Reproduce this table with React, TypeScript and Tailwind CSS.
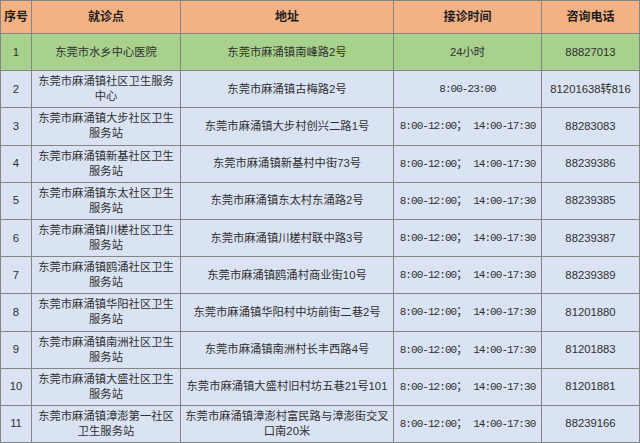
import React from "react";

interface Clinic {
  id: number;
  name: string;
  address: string;
  hours: string;
  phone: string;
}

const clinics: Clinic[] = [
  { id: 1, name: "东莞市水乡中心医院", address: "东莞市麻涌镇南峰路2号", hours: "24小时", phone: "88827013" },
  { id: 2, name: "东莞市麻涌镇社区卫生服务中心", address: "东莞市麻涌镇古梅路2号", hours: "8:00-23:00", phone: "81201638转816" },
  { id: 3, name: "东莞市麻涌镇大步社区卫生服务站", address: "东莞市麻涌镇大步村创兴二路1号", hours: "split", phone: "88283083" },
  { id: 4, name: "东莞市麻涌镇新基社区卫生服务站", address: "东莞市麻涌镇新基村中街73号", hours: "split", phone: "88239386" },
  { id: 5, name: "东莞市麻涌镇东太社区卫生服务站", address: "东莞市麻涌镇东太村东涌路2号", hours: "split", phone: "88239385" },
  { id: 6, name: "东莞市麻涌镇川槎社区卫生服务站", address: "东莞市麻涌镇川槎村联中路3号", hours: "split", phone: "88239387" },
  { id: 7, name: "东莞市麻涌镇鸥涌社区卫生服务站", address: "东莞市麻涌镇鸥涌村商业街10号", hours: "split", phone: "88239389" },
  { id: 8, name: "东莞市麻涌镇华阳社区卫生服务站", address: "东莞市麻涌镇华阳村中坊前街二巷2号", hours: "split", phone: "81201880" },
  { id: 9, name: "东莞市麻涌镇南洲社区卫生服务站", address: "东莞市麻涌镇南洲村长丰西路4号", hours: "split", phone: "81201883" },
  { id: 10, name: "东莞市麻涌镇大盛社区卫生服务站", address: "东莞市麻涌镇大盛村旧村坊五巷21号101", hours: "split", phone: "81201881" },
  { id: 11, name: "东莞市麻涌镇漳澎第一社区卫生服务站", address: "东莞市麻涌镇漳澎村富民路与漳澎街交叉口南20米", hours: "split", phone: "88239166" },
];

const cell =
  "flex items-center justify-center text-center border-r border-b border-[#858585] px-[3px] leading-[15px]";

const Mono = ({ children }: { children: React.ReactNode }) => (
  <span className="font-['Liberation_Mono',monospace] text-[11px] tracking-[-0.95px]">
    {children}
  </span>
);

const Hours = ({ value }: { value: string }) => {
  if (value === "split") {
    return (
      <span className="whitespace-nowrap">
        <Mono>8:00-12:00</Mono>
        <span>；</span>
        <Mono>{"\u00a0"}14:00-17:30</Mono>
      </span>
    );
  }
  if (value === "8:00-23:00") return <Mono>{value}</Mono>;
  return <span>{value}</span>;
};

export default function App() {
  const headers = ["序号", "就诊点", "地址", "接诊时间", "咨询电话"];
  return (
    <div className="w-[640px] h-[443px] overflow-hidden bg-[#dae3f3] font-['Liberation_Sans','Noto_Sans_CJK_SC',sans-serif]">
      <div className="grid grid-cols-[31px_149px_213px_148px_98px] grid-rows-[33px_repeat(11,37.2px)] border-l border-t border-[#858585]">
        {headers.map((h) => (
          <div
            key={h}
            className={`${cell} bg-[#f4b183] text-[12px] font-bold text-[#1e1e1e]`}
          >
            {h}
          </div>
        ))}
        {clinics.map((c) => {
          const bg = c.id === 1 ? "bg-[#a9d18e]" : "bg-[#dae3f3]";
          const body = `${cell} ${bg} text-[11.3px] text-[#2f2f2f]`;
          return (
            <React.Fragment key={c.id}>
              <div className={body}>{c.id}</div>
              <div className={body}>{c.name}</div>
              <div className={body}>{c.address}</div>
              <div className={body}>
                <Hours value={c.hours} />
              </div>
              <div className={body}>{c.phone}</div>
            </React.Fragment>
          );
        })}
      </div>
    </div>
  );
}
